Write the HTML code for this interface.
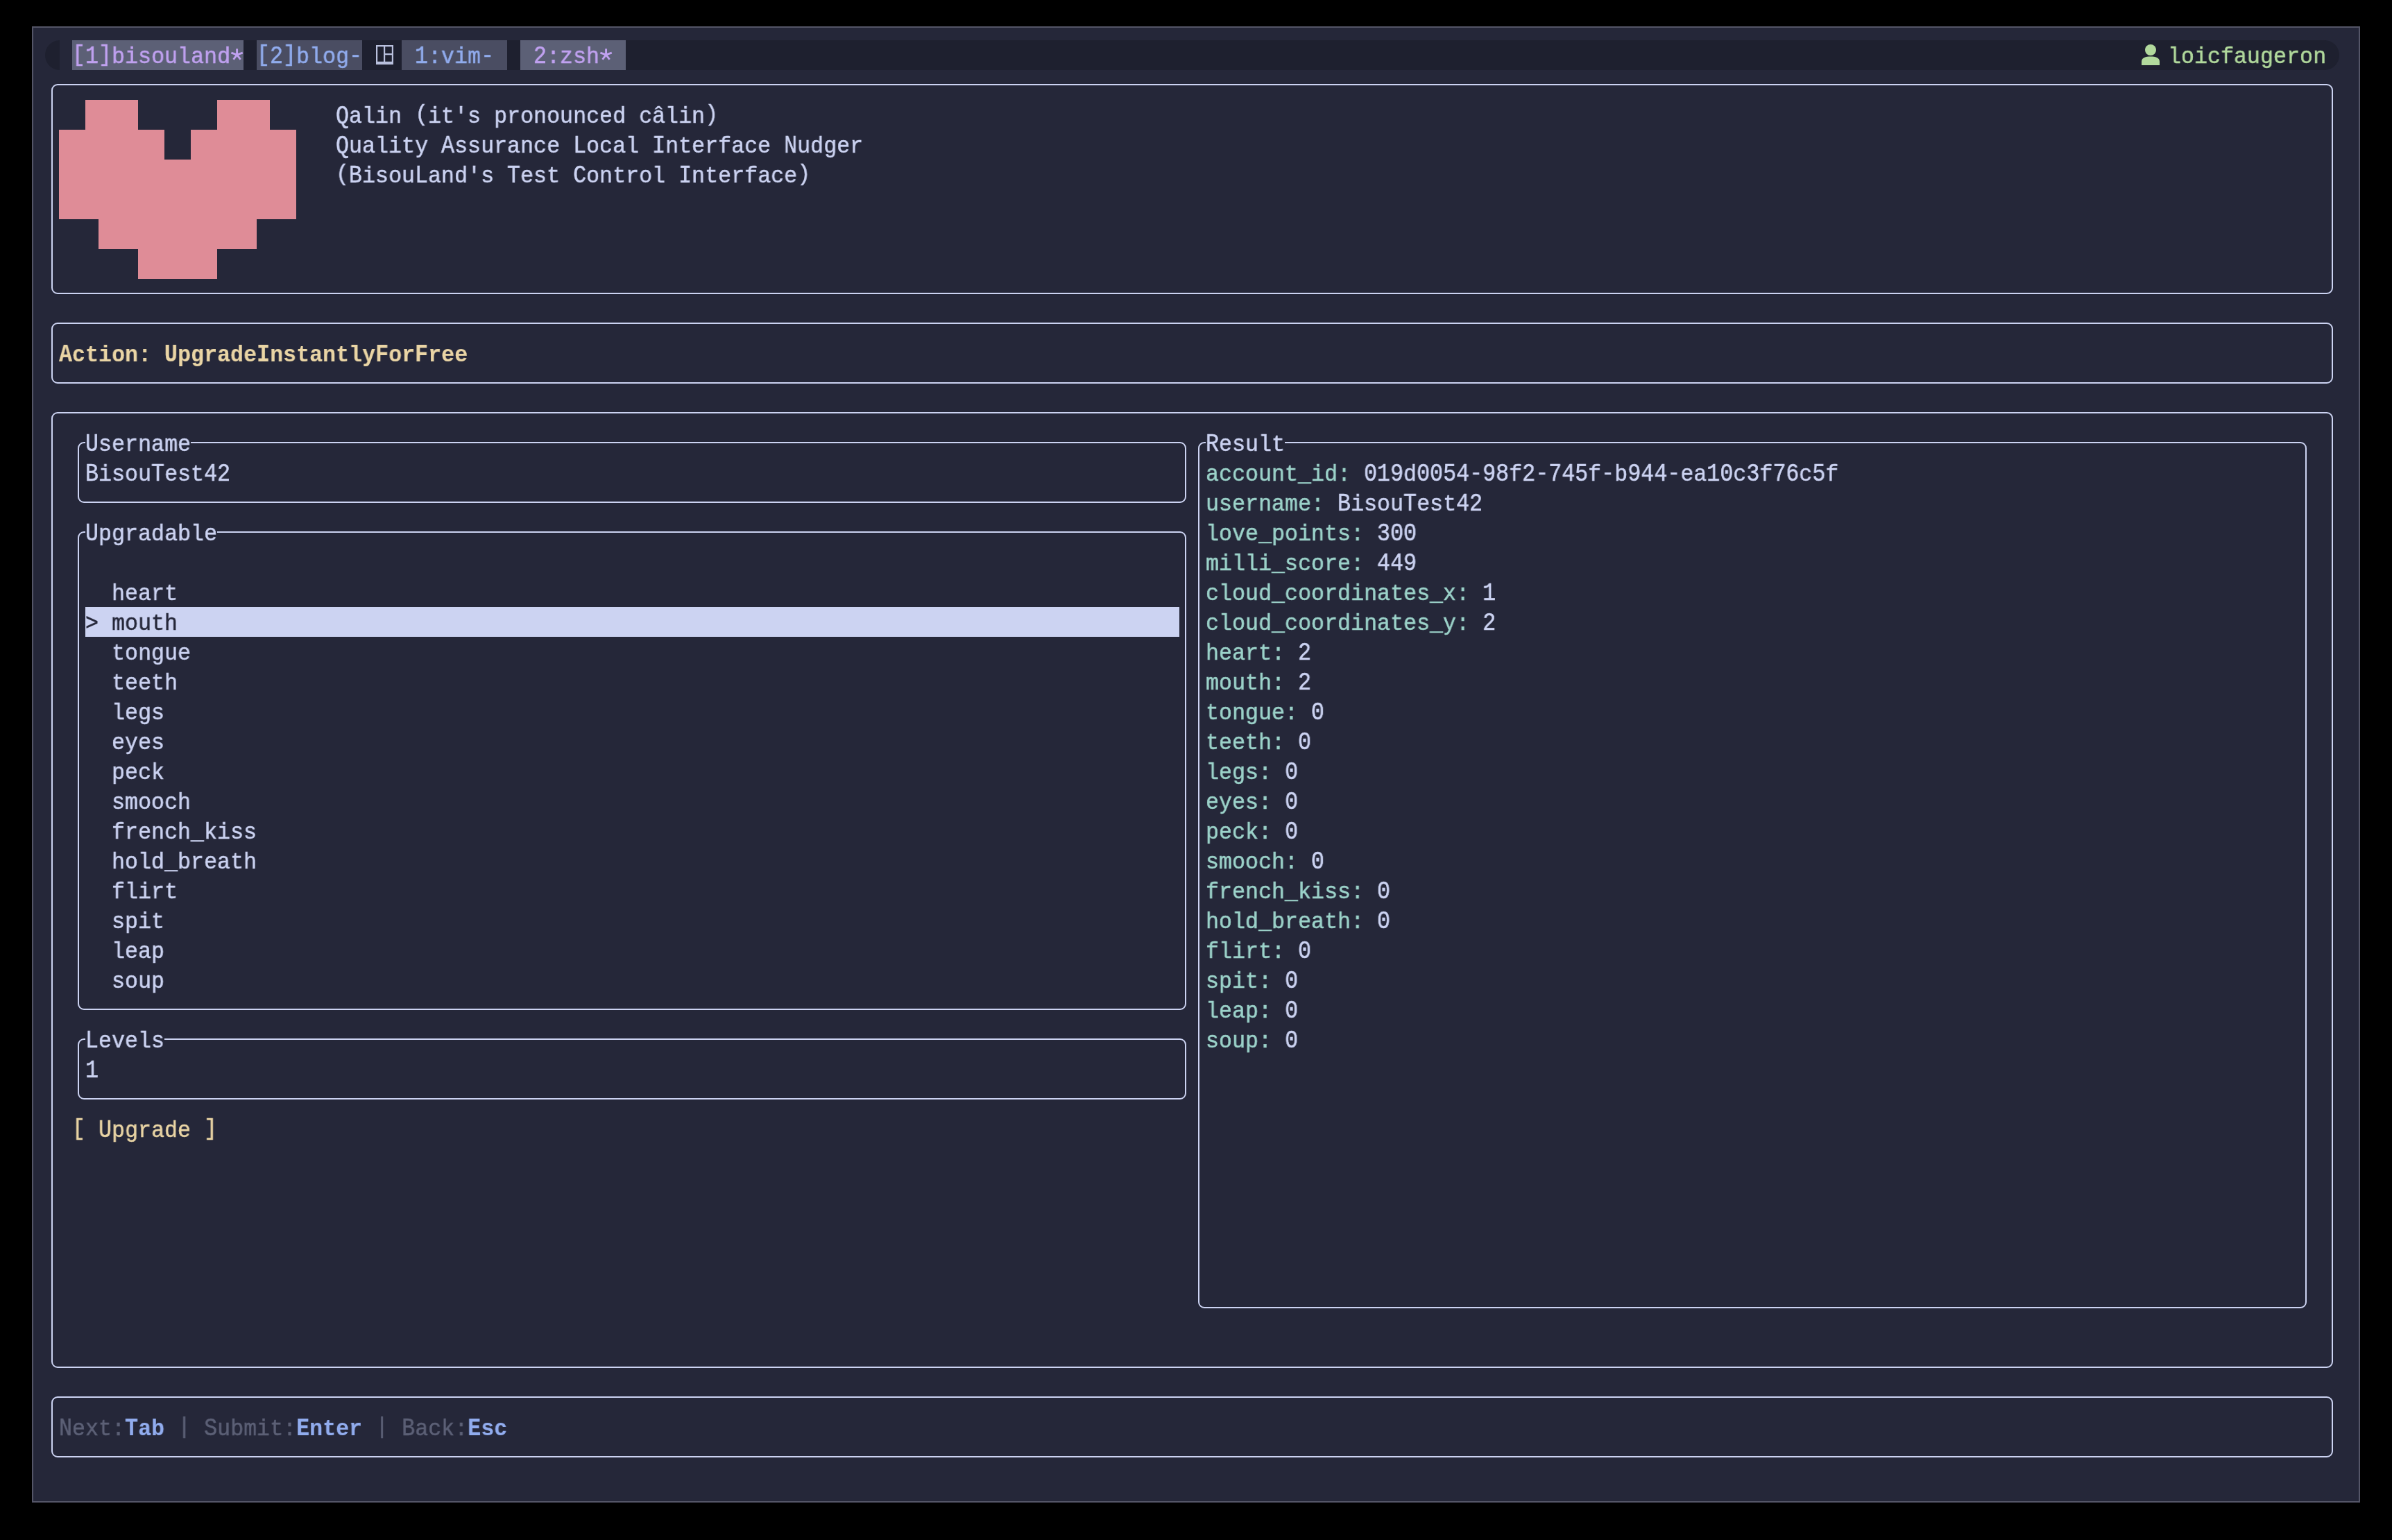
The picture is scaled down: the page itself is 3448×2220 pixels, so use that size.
<!DOCTYPE html><html><head><meta charset="utf-8"><style>
html,body{margin:0;padding:0;width:3448px;height:2220px;overflow:hidden;background:#000;}
.win{position:absolute;left:46px;top:38px;width:3356px;height:2128px;box-sizing:border-box;border:2px solid #545567;background:#252739;}
.r{position:absolute;}
.box{position:absolute;box-sizing:border-box;border:2px solid #ccd3f2;border-radius:9px;}
.t{position:absolute;white-space:pre;font-family:"Liberation Mono",monospace;font-size:33.5px;line-height:43px;height:43px;transform-origin:0 0;transform:scaleX(0.94527);color:#ccd3f2;-webkit-text-stroke:0.5px currentColor;will-change:transform;}
.b{font-weight:bold;-webkit-text-stroke:0.15px currentColor;}
.up{position:relative;top:-3px;}
.up1{position:relative;top:-1px;}
.cap{display:inline-block;transform:scaleY(1.075);transform-origin:0 31px;}
</style></head><body>
<div class="win"></div>
<div class="r" style="left:65px;top:58px;width:21px;height:43px;background:#1e202f;border-radius:21px 0 0 21px / 21.5px 0 0 21.5px"></div>
<div class="r" style="left:351px;top:58px;width:3002px;height:43px;background:#1e202f;"></div>
<div class="r" style="left:3351px;top:58px;width:21px;height:43px;background:#1e202f;border-radius:0 21px 21px 0 / 0 21.5px 21.5px 0"></div>
<div class="r" style="left:104px;top:58px;width:247px;height:43px;background:#5c6076;"></div>
<div class="t" style="left:104px;top:61.0px;"><span style="color:#c0a1f0"><span class="up">[</span><span class="cap">1</span><span class="up">]</span>bisouland </span></div>
<svg class="r" style="left:0;top:0" width="3448" height="200"><path d="M341.60 78.80L341.60 70.20M341.60 78.80L349.78 76.14M341.60 78.80L346.65 85.76M341.60 78.80L336.55 85.76M341.60 78.80L333.42 76.14" stroke="#c0a1f0" stroke-width="2.9" stroke-linecap="butt" fill="none"/></svg>
<div class="r" style="left:370px;top:58px;width:152px;height:43px;background:#4a4d62;"></div>
<div class="t" style="left:370px;top:61.0px;"><span style="color:#91acee"><span class="up">[</span><span class="cap">2</span><span class="up">]</span>blog<span class="up1">-</span></span></div>
<svg class="r" style="left:541px;top:64px" width="27" height="30" viewBox="0 0 27 30">
<path d="M1 1H26V29H1Z M3.2 3.2V24.8H12V3.2Z M14.2 3.2V13H23.8V3.2Z M14.2 15.2V24.8H23.8V15.2Z" fill="#b9c0dd" fill-rule="evenodd"/></svg>
<div class="r" style="left:579px;top:58px;width:152px;height:43px;background:#4a4d62;"></div>
<div class="t" style="left:579px;top:61.0px;"><span style="color:#91acee"> <span class="cap">1</span>:vim<span class="up1">-</span> </span></div>
<div class="r" style="left:750px;top:58px;width:152px;height:43px;background:#5c6076;"></div>
<div class="t" style="left:750px;top:61.0px;"><span style="color:#c0a1f0"> <span class="cap">2</span>:zsh  </span></div>
<svg class="r" style="left:0;top:0" width="3448" height="200"><path d="M873.60 78.80L873.60 70.20M873.60 78.80L881.78 76.14M873.60 78.80L878.65 85.76M873.60 78.80L868.55 85.76M873.60 78.80L865.42 76.14" stroke="#c0a1f0" stroke-width="2.9" stroke-linecap="butt" fill="none"/></svg>
<svg class="r" style="left:3086px;top:63px" width="28" height="32" viewBox="0 0 28 32">
<circle cx="14" cy="9" r="8" fill="#b1d99c"/>
<path d="M1 31 V26 C1 20 7 18.5 14 18.5 C21 18.5 27 20 27 26 V31 Z" fill="#b1d99c"/></svg>
<div class="t" style="left:3125px;top:61.0px;"><span style="color:#b1d99c">loicfaugeron</span></div>
<div class="box" style="left:74px;top:121px;width:3289px;height:303px"></div>
<div class="r" style="left:123px;top:144px;width:76px;height:43px;background:#df8c97;"></div>
<div class="r" style="left:313px;top:144px;width:76px;height:43px;background:#df8c97;"></div>
<div class="r" style="left:85px;top:187px;width:152px;height:43px;background:#df8c97;"></div>
<div class="r" style="left:275px;top:187px;width:152px;height:43px;background:#df8c97;"></div>
<div class="r" style="left:85px;top:230px;width:342px;height:43px;background:#df8c97;"></div>
<div class="r" style="left:85px;top:273px;width:342px;height:43px;background:#df8c97;"></div>
<div class="r" style="left:142px;top:316px;width:228px;height:43px;background:#df8c97;"></div>
<div class="r" style="left:199px;top:359px;width:114px;height:43px;background:#df8c97;"></div>
<div class="t" style="left:484px;top:147.0px;"><span style="color:#ccd3f2"><span class="cap">Q</span>alin <span class="up">(</span>it&#x27;s pronounced câlin<span class="up">)</span></span></div>
<div class="t" style="left:484px;top:190.0px;"><span style="color:#ccd3f2"><span class="cap">Q</span>uality <span class="cap">A</span>ssurance <span class="cap">L</span>ocal <span class="cap">I</span>nterface <span class="cap">N</span>udger</span></div>
<div class="t" style="left:484px;top:233.0px;"><span style="color:#ccd3f2"><span class="up">(</span><span class="cap">B</span>isou<span class="cap">L</span>and&#x27;s <span class="cap">T</span>est <span class="cap">C</span>ontrol <span class="cap">I</span>nterface<span class="up">)</span></span></div>
<div class="box" style="left:74px;top:465px;width:3289px;height:88px"></div>
<div class="t" style="left:85px;top:491.0px;"><span class="b" style="color:#ead5a5"><span class="cap">A</span>ction: <span class="cap">U</span>pgrade<span class="cap">I</span>nstantly<span class="cap">F</span>or<span class="cap">F</span>ree</span></div>
<div class="box" style="left:74px;top:594px;width:3289px;height:1378px"></div>
<div class="box" style="left:112px;top:637px;width:1598px;height:88px"></div>
<div class="r" style="left:123px;top:633px;width:152px;height:10px;background:#252739;"></div>
<div class="t" style="left:123px;top:620.0px;"><span style="color:#ccd3f2"><span class="cap">U</span>sername</span></div>
<div class="t" style="left:123px;top:663.0px;"><span style="color:#ccd3f2"><span class="cap">B</span>isou<span class="cap">T</span>est<span class="cap">4</span><span class="cap">2</span></span></div>
<div class="box" style="left:112px;top:766px;width:1598px;height:690px"></div>
<div class="r" style="left:123px;top:762px;width:190px;height:10px;background:#252739;"></div>
<div class="t" style="left:123px;top:749.0px;"><span style="color:#ccd3f2"><span class="cap">U</span>pgradable</span></div>
<div class="t" style="left:161px;top:835.0px;"><span style="color:#ccd3f2">heart</span></div>
<div class="r" style="left:123px;top:875px;width:1577px;height:43px;background:#ccd3f2;"></div>
<div class="t" style="left:123px;top:878.0px;"><span style="color:#252739">&gt; mouth</span></div>
<div class="t" style="left:161px;top:921.0px;"><span style="color:#ccd3f2">tongue</span></div>
<div class="t" style="left:161px;top:964.0px;"><span style="color:#ccd3f2">teeth</span></div>
<div class="t" style="left:161px;top:1007.0px;"><span style="color:#ccd3f2">legs</span></div>
<div class="t" style="left:161px;top:1050.0px;"><span style="color:#ccd3f2">eyes</span></div>
<div class="t" style="left:161px;top:1093.0px;"><span style="color:#ccd3f2">peck</span></div>
<div class="t" style="left:161px;top:1136.0px;"><span style="color:#ccd3f2">smooch</span></div>
<div class="t" style="left:161px;top:1179.0px;"><span style="color:#ccd3f2">french_kiss</span></div>
<div class="t" style="left:161px;top:1222.0px;"><span style="color:#ccd3f2">hold_breath</span></div>
<div class="t" style="left:161px;top:1265.0px;"><span style="color:#ccd3f2">flirt</span></div>
<div class="t" style="left:161px;top:1308.0px;"><span style="color:#ccd3f2">spit</span></div>
<div class="t" style="left:161px;top:1351.0px;"><span style="color:#ccd3f2">leap</span></div>
<div class="t" style="left:161px;top:1394.0px;"><span style="color:#ccd3f2">soup</span></div>
<div class="box" style="left:112px;top:1497px;width:1598px;height:88px"></div>
<div class="r" style="left:123px;top:1493px;width:114px;height:10px;background:#252739;"></div>
<div class="t" style="left:123px;top:1480.0px;"><span style="color:#ccd3f2"><span class="cap">L</span>evels</span></div>
<div class="t" style="left:123px;top:1523.0px;"><span style="color:#ccd3f2"><span class="cap">1</span></span></div>
<div class="t" style="left:104px;top:1609.0px;"><span style="color:#ead5a5"><span class="up">[</span> <span class="cap">U</span>pgrade <span class="up">]</span></span></div>
<div class="box" style="left:1727px;top:637px;width:1598px;height:1249px"></div>
<div class="r" style="left:1738px;top:633px;width:114px;height:10px;background:#252739;"></div>
<div class="t" style="left:1738px;top:620.0px;"><span style="color:#ccd3f2"><span class="cap">R</span>esult</span></div>
<div class="t" style="left:1738px;top:663.0px;"><span style="color:#9cd3ca">account_id: </span><span style="color:#ccd3f2"><span class="cap">0</span><span class="cap">1</span><span class="cap">9</span>d<span class="cap">0</span><span class="cap">0</span><span class="cap">5</span><span class="cap">4</span><span class="up1">-</span><span class="cap">9</span><span class="cap">8</span>f<span class="cap">2</span><span class="up1">-</span><span class="cap">7</span><span class="cap">4</span><span class="cap">5</span>f<span class="up1">-</span>b<span class="cap">9</span><span class="cap">4</span><span class="cap">4</span><span class="up1">-</span>ea<span class="cap">1</span><span class="cap">0</span>c<span class="cap">3</span>f<span class="cap">7</span><span class="cap">6</span>c<span class="cap">5</span>f</span></div>
<div class="t" style="left:1738px;top:706.0px;"><span style="color:#9cd3ca">username: </span><span style="color:#ccd3f2"><span class="cap">B</span>isou<span class="cap">T</span>est<span class="cap">4</span><span class="cap">2</span></span></div>
<div class="t" style="left:1738px;top:749.0px;"><span style="color:#9cd3ca">love_points: </span><span style="color:#ccd3f2"><span class="cap">3</span><span class="cap">0</span><span class="cap">0</span></span></div>
<div class="t" style="left:1738px;top:792.0px;"><span style="color:#9cd3ca">milli_score: </span><span style="color:#ccd3f2"><span class="cap">4</span><span class="cap">4</span><span class="cap">9</span></span></div>
<div class="t" style="left:1738px;top:835.0px;"><span style="color:#9cd3ca">cloud_coordinates_x: </span><span style="color:#ccd3f2"><span class="cap">1</span></span></div>
<div class="t" style="left:1738px;top:878.0px;"><span style="color:#9cd3ca">cloud_coordinates_y: </span><span style="color:#ccd3f2"><span class="cap">2</span></span></div>
<div class="t" style="left:1738px;top:921.0px;"><span style="color:#9cd3ca">heart: </span><span style="color:#ccd3f2"><span class="cap">2</span></span></div>
<div class="t" style="left:1738px;top:964.0px;"><span style="color:#9cd3ca">mouth: </span><span style="color:#ccd3f2"><span class="cap">2</span></span></div>
<div class="t" style="left:1738px;top:1007.0px;"><span style="color:#9cd3ca">tongue: </span><span style="color:#ccd3f2"><span class="cap">0</span></span></div>
<div class="t" style="left:1738px;top:1050.0px;"><span style="color:#9cd3ca">teeth: </span><span style="color:#ccd3f2"><span class="cap">0</span></span></div>
<div class="t" style="left:1738px;top:1093.0px;"><span style="color:#9cd3ca">legs: </span><span style="color:#ccd3f2"><span class="cap">0</span></span></div>
<div class="t" style="left:1738px;top:1136.0px;"><span style="color:#9cd3ca">eyes: </span><span style="color:#ccd3f2"><span class="cap">0</span></span></div>
<div class="t" style="left:1738px;top:1179.0px;"><span style="color:#9cd3ca">peck: </span><span style="color:#ccd3f2"><span class="cap">0</span></span></div>
<div class="t" style="left:1738px;top:1222.0px;"><span style="color:#9cd3ca">smooch: </span><span style="color:#ccd3f2"><span class="cap">0</span></span></div>
<div class="t" style="left:1738px;top:1265.0px;"><span style="color:#9cd3ca">french_kiss: </span><span style="color:#ccd3f2"><span class="cap">0</span></span></div>
<div class="t" style="left:1738px;top:1308.0px;"><span style="color:#9cd3ca">hold_breath: </span><span style="color:#ccd3f2"><span class="cap">0</span></span></div>
<div class="t" style="left:1738px;top:1351.0px;"><span style="color:#9cd3ca">flirt: </span><span style="color:#ccd3f2"><span class="cap">0</span></span></div>
<div class="t" style="left:1738px;top:1394.0px;"><span style="color:#9cd3ca">spit: </span><span style="color:#ccd3f2"><span class="cap">0</span></span></div>
<div class="t" style="left:1738px;top:1437.0px;"><span style="color:#9cd3ca">leap: </span><span style="color:#ccd3f2"><span class="cap">0</span></span></div>
<div class="t" style="left:1738px;top:1480.0px;"><span style="color:#9cd3ca">soup: </span><span style="color:#ccd3f2"><span class="cap">0</span></span></div>
<div class="box" style="left:74px;top:2013px;width:3289px;height:88px"></div>
<div class="t" style="left:85px;top:2039.0px;"><span style="color:#5c6076"><span class="cap">N</span>ext:</span><span class="b" style="color:#91acee"><span class="cap">T</span>ab</span><span style="color:#5c6076"> <span class="up">|</span> </span><span style="color:#5c6076"><span class="cap">S</span>ubmit:</span><span class="b" style="color:#91acee"><span class="cap">E</span>nter</span><span style="color:#5c6076"> <span class="up">|</span> </span><span style="color:#5c6076"><span class="cap">B</span>ack:</span><span class="b" style="color:#91acee"><span class="cap">E</span>sc</span></div>
</body></html>
